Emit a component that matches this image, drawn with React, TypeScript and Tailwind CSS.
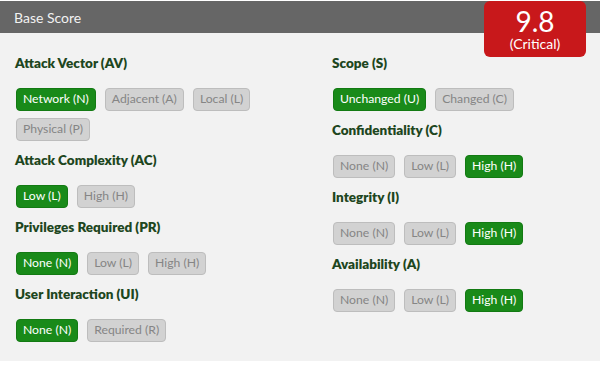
import React from "react";

type Opt = { label: string; on?: boolean };
type Sec = { title: string; opts: Opt[] };

const left: Sec[] = [
  {
    title: "Attack Vector (AV)",
    opts: [
      { label: "Network (N)", on: true },
      { label: "Adjacent (A)" },
      { label: "Local (L)" },
      { label: "Physical (P)" },
    ],
  },
  {
    title: "Attack Complexity (AC)",
    opts: [{ label: "Low (L)", on: true }, { label: "High (H)" }],
  },
  {
    title: "Privileges Required (PR)",
    opts: [{ label: "None (N)", on: true }, { label: "Low (L)" }, { label: "High (H)" }],
  },
  {
    title: "User Interaction (UI)",
    opts: [{ label: "None (N)", on: true }, { label: "Required (R)" }],
  },
];

const right: Sec[] = [
  {
    title: "Scope (S)",
    opts: [{ label: "Unchanged (U)", on: true }, { label: "Changed (C)" }],
  },
  {
    title: "Confidentiality (C)",
    opts: [{ label: "None (N)" }, { label: "Low (L)" }, { label: "High (H)", on: true }],
  },
  {
    title: "Integrity (I)",
    opts: [{ label: "None (N)" }, { label: "Low (L)" }, { label: "High (H)", on: true }],
  },
  {
    title: "Availability (A)",
    opts: [{ label: "None (N)" }, { label: "Low (L)" }, { label: "High (H)", on: true }],
  },
];

function Section({ s }: { s: Sec }) {
  return (
    <div className="mb-[9px]">
      <div className="h-[20px] leading-[20px] text-[13.5px] font-extrabold text-[#1d4620]">{s.title}</div>
      <div className="mt-[15px] ml-px flex flex-wrap gap-x-[9px] gap-y-[7px]">
        {s.opts.map((o) => (
          <div
            key={o.label}
            className={
              o.on
                ? "h-[23px] px-[6px] flex items-center rounded-[4px] border border-[#137a13] bg-[#198a19] text-white text-[12.2px]"
                : "h-[23px] px-[6px] flex items-center rounded-[4px] border border-[#bdbdbd] bg-[#d2d2d2] text-[#858585] text-[12.2px]"
            }
          >
            {o.label}
          </div>
        ))}
      </div>
    </div>
  );
}

export default function App() {
  return (
    <div
      className="w-[600px] h-[366px] bg-white pt-px"
      style={{ fontFamily: "Lato, 'Open Sans', sans-serif" }}
    >
      <div className="relative bg-[#f2f2f2] h-[360px]">
        <div className="h-[32px] bg-[#666666] flex items-center pl-[14px] text-[14px] text-[#f2f2f2]">
          Base Score
        </div>
        <div className="absolute right-[14px] top-0 w-[102px] h-[56px] bg-[#c8181b] rounded-[6px] flex flex-col items-center text-white">
          <div className="text-[28px] leading-[26px] mt-[7px]">9.8</div>
          <div className="text-[14px] leading-[15px] mt-[2px]">(Critical)</div>
        </div>
        <div className="flex pt-[20px] pl-[15px]">
          <div className="w-[317px]">
            {left.map((s) => (
              <Section key={s.title} s={s} />
            ))}
          </div>
          <div className="flex-1">
            {right.map((s) => (
              <Section key={s.title} s={s} />
            ))}
          </div>
        </div>
      </div>
    </div>
  );
}
